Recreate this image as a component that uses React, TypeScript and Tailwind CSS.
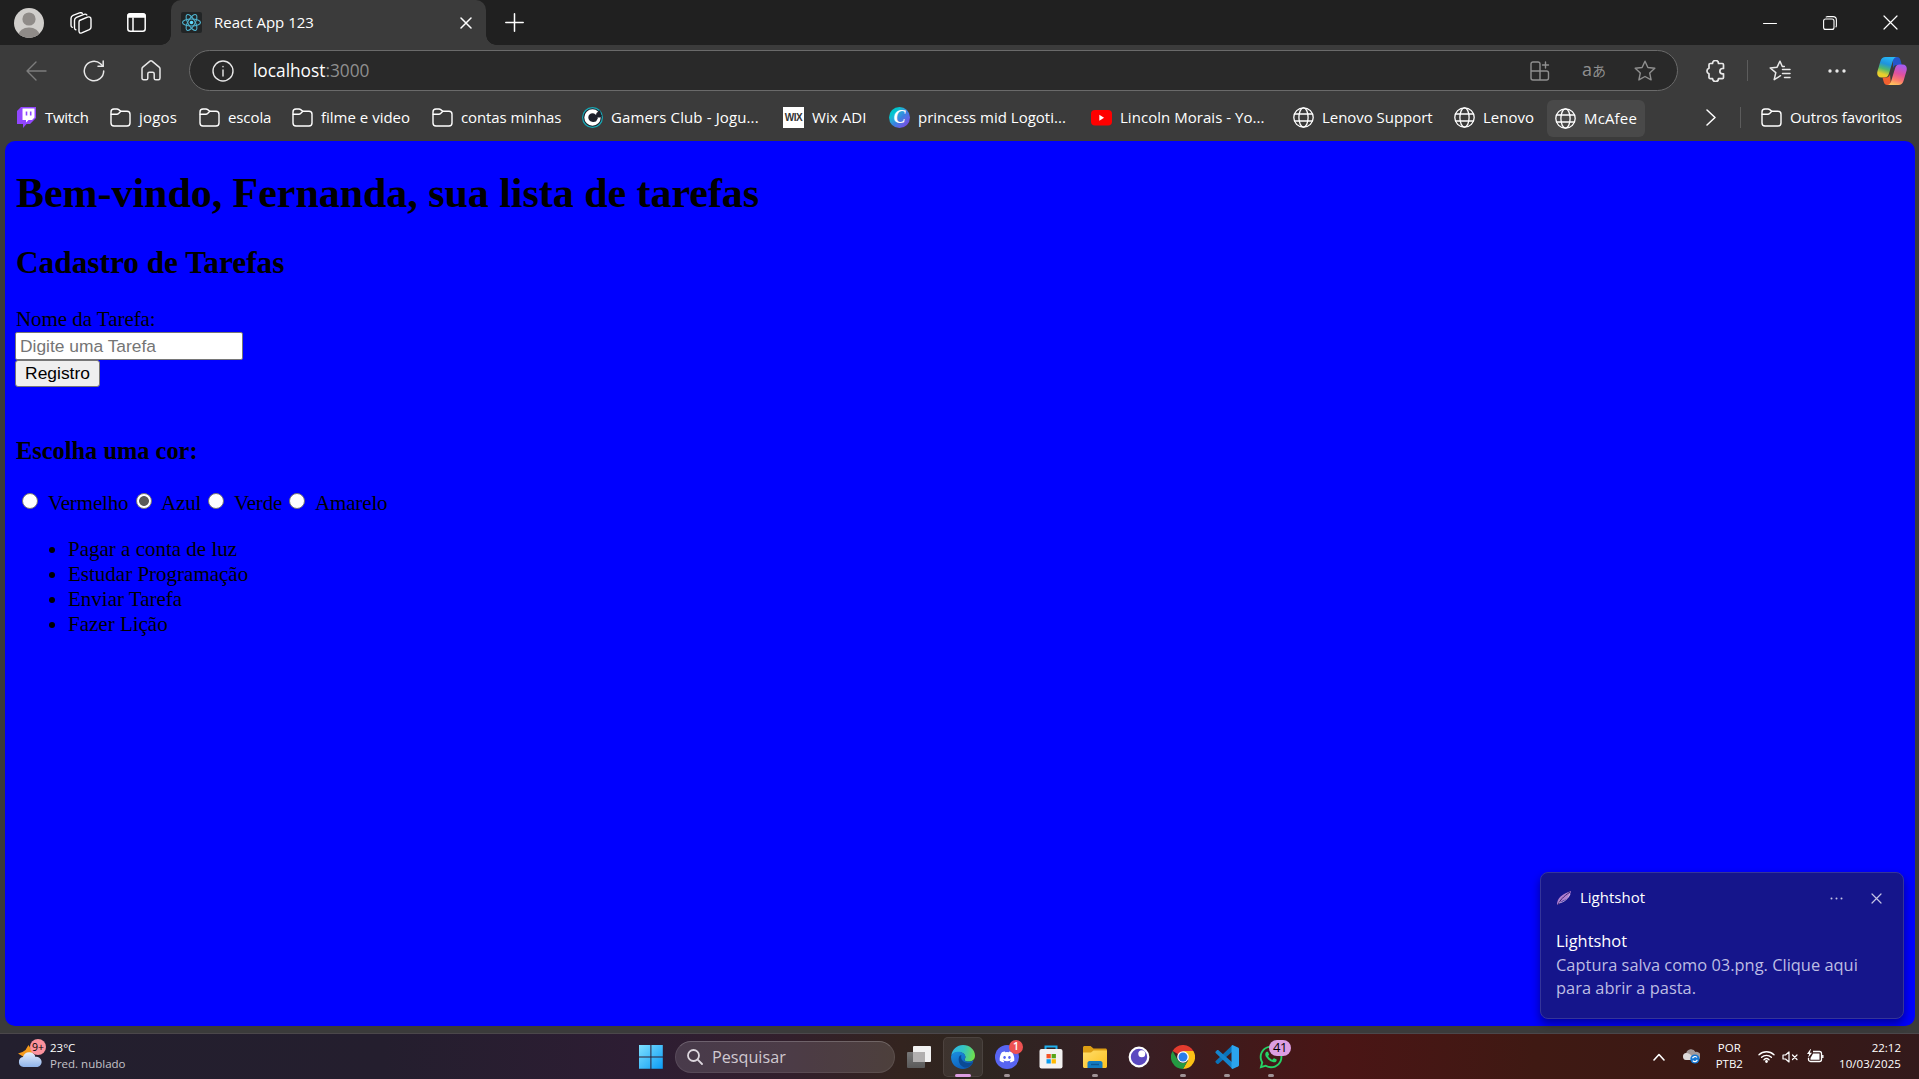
import React from "react";
import { FaDiscord, FaWhatsapp } from "react-icons/fa6";

type Kids = { children: React.ReactNode };

function Line({ w, h, sw = 1.5, cls = "", children }: { w: number; h: number; sw?: number; cls?: string } & Kids) {
  return (
    <svg width={w} height={h} viewBox={`0 0 ${w} ${h}`} fill="none" stroke="currentColor" strokeWidth={sw} strokeLinecap="round" strokeLinejoin="round" className={"shrink-0 " + cls}>
      {children}
    </svg>
  );
}

/* ---------- browser icons ---------- */

const Avatar = () => (
  <svg width="30" height="30" viewBox="0 0 30 30" className="ml-3.5 shrink-0">
    <clipPath id="av"><circle cx="15" cy="15" r="15" /></clipPath>
    <g clipPath="url(#av)">
      <rect width="30" height="30" fill="#d0cecb" />
      <circle cx="15" cy="11" r="6.6" fill="#8f8b88" />
      <ellipse cx="15" cy="27" rx="10.5" ry="7.6" fill="#8f8b88" />
    </g>
  </svg>
);

const ReactLogo = () => (
  <svg width="21" height="21" viewBox="0 0 21 21" className="shrink-0">
    <rect width="21" height="21" rx="2" fill="#222526" />
    <g fill="none" stroke="#4fb3cf" strokeWidth="1.1">
      <ellipse cx="10.5" cy="10.5" rx="9" ry="3.5" />
      <ellipse cx="10.5" cy="10.5" rx="9" ry="3.5" transform="rotate(60 10.5 10.5)" />
      <ellipse cx="10.5" cy="10.5" rx="9" ry="3.5" transform="rotate(120 10.5 10.5)" />
    </g>
    <circle cx="10.5" cy="10.5" r="1.8" fill="#61dafb" />
  </svg>
);

const Folder = () => (
  <Line w={21} h={21} sw={1.4}>
    <path d="M1 5a3 3 0 0 1 3-3h3c.7 0 1.2.2 1.7.6L10.8 4.300h6.200a3 3 0 0 1 3 3V16a3 3 0 0 1-3 3H4a3 3 0 0 1-3-3z" />
    <path d="M1.200 7.300h5.600c.8 0 1.300-.2 1.800-.7l2.200-2.300" />
  </Line>
);

const Globe = () => (
  <Line w={21} h={21} sw={1.300}>
    <circle cx="10.500" cy="10.500" r="9.700" />
    <ellipse cx="10.500" cy="10.500" rx="4.600" ry="9.700" />
    <path d="M1.700 7h17.600M1.700 14h17.600" />
  </Line>
);

const Twitch = () => (
  <svg width="19" height="21" viewBox="0 0 19 21" className="mr-px shrink-0">
    <path d="M4 0H19V11L13 17H9.500L6 21V17H0V4z" fill="#9146ff" />
    <path d="M5.500 1.500H17.500V10.500L15 13H11.500L9 15.500V13H5.500z" fill="#fff" />
    <path d="M9.500 4.500V8.500M13.700 4.500V8.500" stroke="#9146ff" strokeWidth="1.600" />
  </svg>
);

const GamersClub = () => (
  <svg width="21" height="21" viewBox="0 0 21 21" className="shrink-0">
    <circle cx="10.500" cy="10.500" r="10.500" fill="#19a9b5" />
    <circle cx="10.500" cy="10.500" r="9.300" fill="#1d1f2b" />
    <circle cx="10.500" cy="10.500" r="6.200" fill="none" stroke="#fff" strokeWidth="4" />
    <path d="M10 8h10l-1.500 2.500H10z" fill="#1d1f2b" />
    <path d="M14.500 6l3.500-3 1 5h-5z" fill="#1d1f2b" />
    <path d="M8.500 9.500L13 7.500 16 11l-2 3.500-3 .5-2.500-2z" fill="#1d1f2b" />
  </svg>
);

const Wix = () => (
  <span className="flex size-[21px] shrink-0 items-center justify-center bg-white pb-px font-['Liberation_Sans',sans-serif] text-[10px] font-bold tracking-[-0.4px] text-[#333]">WIX</span>
);

const Canva = () => (
  <span className="flex size-[21px] shrink-0 items-center justify-center rounded-full bg-linear-to-br from-[#00c4cc] from-25% via-[#3a7fe0] via-55% to-[#7d2ae8] pb-px font-['Liberation_Serif',serif] text-[18px] leading-none font-bold text-white italic">C</span>
);

const YouTube = () => (
  <svg width="21" height="21" viewBox="0 0 21 21" className="shrink-0">
    <rect y="3" width="21" height="15.500" rx="4" fill="#f00" />
    <path d="M8.300 7.800v6l4.800-3z" fill="#fff" />
  </svg>
);

const Copilot = () => (
  <svg width="30" height="28" viewBox="0 0 30 28" className="shrink-0">
    <defs>
      <linearGradient id="cpA" x1="0.6" y1="0" x2="0.3" y2="1">
        <stop offset="0" stopColor="#27b6f5" /><stop offset=".35" stopColor="#1f93dd" /><stop offset=".6" stopColor="#52b86a" /><stop offset=".85" stopColor="#e9cf2c" />
      </linearGradient>
      <linearGradient id="cpB" x1="0.7" y1="0" x2="0.4" y2="1">
        <stop offset="0" stopColor="#a45bf2" /><stop offset=".45" stopColor="#e0519f" /><stop offset=".75" stopColor="#fb7a6c" /><stop offset="1" stopColor="#ffc25c" />
      </linearGradient>
    </defs>
    <path d="M16 0h4c2.300 0 3 1.500 3.600 3.500L24.800 8H20c-2.500 0-3.500 1.500-4 3.500z" fill="#2456c9" />
    <path d="M8.500 0H19.500C17.200.4 16.400 2 15.800 4L12 16.500C11.200 19 10 20.500 7.500 20.500H4.500C1 20.500-.3 18 .4 14.500L3.500 4C4.300 1.300 6 0 8.500 0z" fill="url(#cpA)" />
    <path d="M14 28h-3.500C8 28 7.200 26.500 6.600 24.500L5.500 20.500H9c2.500 0 3.500-1.500 4-3.500z" fill="#f2602f" />
    <path d="M21.500 28H10.500c2.300-.4 3.100-2 3.700-4L18 11.500C18.800 9 20 7.500 22.500 7.500h3c3.500 0 4.800 2.500 4.100 6L26.500 24c-.8 2.700-2.500 4-5 4z" fill="url(#cpB)" />
  </svg>
);

/* ---------- taskbar icons ---------- */

const Windows = () => (
  <svg width="24" height="24" viewBox="0 0 24 24" className="shrink-0">
    <linearGradient id="win" x1="0" y1="0" x2="1" y2="1"><stop offset="0" stopColor="#7fe0ff" /><stop offset="1" stopColor="#0a9bf5" /></linearGradient>
    <path d="M0 0h11.400v11.400H0zM12.400 0h11.400v11.400H12.400zM0 12.400h11.400v11.400H0zM12.400 12.400h11.400v11.400H12.400z" fill="url(#win)" />
  </svg>
);

const TaskView = () => (
  <svg width="24" height="22" viewBox="0 0 24 22">
    <linearGradient id="tv" x1="0" y1="0" x2="0" y2="1"><stop offset="0" stopColor="#777" /><stop offset="1" stopColor="#5a5a5a" /></linearGradient>
    <rect y="6" width="18" height="16" rx="1" fill="url(#tv)" />
    <rect x="6" width="18" height="16" rx="1" fill="#f2f2f2" />
    <rect x="6" y="6" width="12" height="10" fill="#b2b0b0" />
  </svg>
);

const Edge = () => (
  <svg width="24" height="24" viewBox="0 0 24 24">
    <defs>
      <linearGradient id="eA" x1="0" y1=".3" x2="1" y2=".5"><stop offset="0" stopColor="#2cb4e8" /><stop offset=".5" stopColor="#35c5c0" /><stop offset="1" stopColor="#6fe04c" /></linearGradient>
      <linearGradient id="eB" x1="0" y1="0" x2=".6" y2="1"><stop offset="0" stopColor="#1b90e0" /><stop offset="1" stopColor="#0d5cb8" /></linearGradient>
    </defs>
    <path d="M.3 10.500C1.200 4.500 6 0 12 0c7 0 12 5 12 10.500 0 4-3 6-6.500 6-2.500 0-4-.8-4-1.800 0-.7.9-1 .9-2.700C14.400 9.500 11.500 7 8 7 3.500 7 .8 9.500.3 10.500z" fill="url(#eA)" />
    <path d="M.1 11.500C.6 8.800 3.600 6.800 7.500 6.800c4 0 6.900 2.500 6.900 5.200 0 1.700-.9 2-.9 2.700 0 1 1.500 1.800 4 1.800 2.200 0 3.800-.6 5-1.300C21.500 20 17.500 24 12 24 5 24-.5 18.500.1 11.500z" fill="url(#eB)" />
    <path d="M8.200 11.500C6.500 16.500 9 21 13.500 22.500c4 .3 7.200-2 8.800-5.800-2.300 1.300-5.500 1.800-8.300.6-3-1.200-4.500-4-3.600-7.300-1 .2-1.800.8-2.200 1.500z" fill="#0b4a94" />
  </svg>
);

const Store = () => (
  <svg width="24" height="24" viewBox="0 0 24 24">
    <path d="M6.500 5V1.500h11V5" fill="none" stroke="#1fb0ee" strokeWidth="2" />
    <rect x=".5" y="4" width="23" height="19.500" rx="2" fill="#f3f2f1" />
    <rect x="7.500" y="9" width="4.300" height="4.300" fill="#f35325" /><rect x="12.600" y="9" width="4.300" height="4.300" fill="#57a518" />
    <rect x="7.500" y="14.200" width="4.300" height="4.300" fill="#0a9cee" /><rect x="12.600" y="14.200" width="4.300" height="4.300" fill="#ffb900" />
  </svg>
);

const Explorer = () => (
  <svg width="24" height="22" viewBox="0 0 24 22">
    <linearGradient id="fx" x1="0" y1="0" x2="1" y2="1"><stop offset="0" stopColor="#ffdd6b" /><stop offset="1" stopColor="#fcc01d" /></linearGradient>
    <path d="M0 1.500C0 .7.700 0 1.500 0h6l3 2.500H22.500c.8 0 1.500.7 1.500 1.500V8H0z" fill="#dd9e13" />
    <path d="M0 6.500h8l2.500-2H24V20.500c0 .8-.7 1.500-1.500 1.500h-21C.7 22 0 21.300 0 20.500z" fill="url(#fx)" />
    <path d="M4.500 22v-5c0-1 .8-2 2-2h11c1.200 0 2 1 2 2v5z" fill="#127bc0" />
    <path d="M8 18.500h8" stroke="#0a5794" strokeWidth="1.400" />
  </svg>
);

const Insomnia = () => (
  <svg width="22" height="22" viewBox="0 0 22 22">
    <circle cx="11" cy="11" r="9.300" fill="#5a49c0" stroke="#fff" strokeWidth="2.200" />
    <circle cx="13.800" cy="7.700" r="3.500" fill="#fff" />
  </svg>
);

const Chrome = () => (
  <svg width="24" height="24" viewBox="0 0 24 24">
    <path d="M12 12L1.600 6A12 12 0 0 1 22.400 6z" fill="#e33b2e" />
    <path d="M12 6h10.400a12 12 0 0 1-10.400 18l5.200-9z" fill="#fbc116" />
    <path d="M1.600 6l5.200 9a6 6 0 0 0 10.400 0L12 24A12 12 0 0 1 1.600 6z" fill="#249a42" />
    <circle cx="12" cy="12" r="5.800" fill="#fff" />
    <circle cx="12" cy="12" r="4.500" fill="#2b7de9" />
  </svg>
);

const VSCode = () => (
  <svg width="24" height="24" viewBox="0 0 24 24">
    <path d="M17.500 0L17.500 6.500 3.500 18.800c-.4.400-.9.400-1.300.1L.7 17.600c-.5-.5-.5-1.100 0-1.600z" fill="#0a72b8" />
    <path d="M17.500 24L17.500 17.500 3.500 5.200c-.4-.4-.9-.4-1.300-.1L.7 6.400c-.5.5-.5 1.100 0 1.600z" fill="#1584cc" />
    <path d="M17.500 0L23 2.500c.6.300 1 .8 1 1.500V20c0 .7-.4 1.200-1 1.500L17.500 24c-.7-.3-1-.8-1-1.600V1.600c0-.8.300-1.300 1-1.600z" fill="#2ba4ee" />
  </svg>
);

const Weather = () => (
  <svg width="28" height="28" viewBox="0 0 28 28" className="shrink-0">
    <linearGradient id="wc" x1="0" y1="0" x2="0" y2="1"><stop offset="0" stopColor="#e6effc" /><stop offset="1" stopColor="#8fb3ea" /></linearGradient>
    <path d="M10.500 5l2.500 4 4 8-9 3-3-3.500-5-3 4.500-1.500 3-2z" fill="#f59a1b" />
    <path d="M5.500 27a5 5 0 0 1-.5-9.900 6.500 6.500 0 0 1 12.500-.2A5 5 0 0 1 19.500 27z" fill="url(#wc)" />
  </svg>
);

/* ---------- pieces ---------- */

function Bookmark({ cls, icon, label }: { cls: string; icon: React.ReactNode; label: string }) {
  return (
    <div className={"flex shrink-0 items-center gap-2 whitespace-nowrap " + cls}>
      {icon}
      <span>{label}</span>
    </div>
  );
}

function TaskItem({ active = false, dot = false, children }: { active?: boolean; dot?: boolean } & Kids) {
  return (
    <div className={"relative flex h-10 w-10 items-center justify-center rounded-[5px] " + (active ? "border border-white/8 bg-white/7" : "")}>
      {children}
      {active && <span className="absolute -bottom-px h-[3px] w-4 rounded-full bg-[#dc9ee2]" />}
      {dot && <span className="absolute bottom-0 h-[3px] w-1.5 rounded-full bg-[#a09396]" />}
    </div>
  );
}

function Radio({ checked = false }: { checked?: boolean }) {
  return (
    <input
      type="radio"
      name="cor"
      defaultChecked={checked}
      className="mt-[2px] size-4 shrink-0 appearance-none self-start rounded-full border border-[#767676] bg-white checked:bg-[radial-gradient(circle,#5a5a5a_4.5px,#fff_5.3px)]"
    />
  );
}

function TabBar() {
  return (
    <div className="flex h-[45px] shrink-0 items-center bg-[#202020] text-white">
      <Avatar />
      <Line w={22} h={22} sw={1.4} cls="ml-[26px]">
        <path d="M9.500 8.500l8-3.300c1.700-.7 3.500 0 3.500 2v8c0 1.300-.6 2-1.700 2.500l-7.600 3.200c-1.700.6-2.700-.2-2.700-1.800v-8.500c0-1.100.2-1.700.5-2.100z" />
        <path d="M5.800 17.800c-.9-.2-1.300-.9-1.300-2V8.500c0-1.600.6-2.600 2-3.200L14 2.300c1.200-.4 2.200-.2 2.800.6" />
        <path d="M2.300 15.300C1.400 15 1 14.200 1 13.200V6.500c0-1.600.6-2.600 2-3.200L9.500.9c1.200-.4 2.200-.2 2.800.4" />
      </Line>
      <Line w={19} h={19} sw={1.500} cls="ml-[35px]">
        <rect x=".8" y=".8" width="17.400" height="17.400" rx="2.500" />
        <path d="M1 4h17V3a2 2 0 0 0-2-2H3a2 2 0 0 0-2 2z" fill="currentColor" />
        <path d="M6 5v13" />
      </Line>
      <div className="relative ml-[25px] flex h-full w-[315px] items-center rounded-t-[10px] bg-[#3b3b3b] pl-[10px]">
        <span className="absolute bottom-0 left-[-10px] size-[10px] bg-[radial-gradient(circle_at_0_0,#202020_9.5px,#3b3b3b_10px)]" />
        <span className="absolute right-[-10px] bottom-0 size-[10px] bg-[radial-gradient(circle_at_100%_0,#202020_9.5px,#3b3b3b_10px)]" />
        <ReactLogo />
        <span className="ml-3 text-[15px]">React App 123</span>
        <Line w={12} h={12} sw={1.500} cls="mr-[14px] ml-auto"><path d="M1 1l10 10M11 1L1 11" /></Line>
      </div>
      <Line w={19} h={19} sw={1.500} cls="ml-[19px]"><path d="M9.500 .8v17.400M.8 9.500h17.400" /></Line>
      <div className="mr-[21px] ml-auto flex items-center gap-[46px]">
        <Line w={14} h={14} sw={1}><path d="M.5 7.500h13" /></Line>
        <Line w={14} h={14} sw={1.100}>
          <rect x=".6" y="3" width="10.400" height="10.400" rx="2" />
          <path d="M3.200 1c.5-.3.900-.4 1.400-.4H10c2 0 3.400 1.400 3.400 3.400v5.400c0 .6-.1 1-.4 1.400" />
        </Line>
        <Line w={15} h={15} sw={1.200}><path d="M1 1l13 13M14 1L1 14" /></Line>
      </div>
    </div>
  );
}

function Toolbar() {
  return (
    <div className="flex h-[51px] shrink-0 items-center text-[#e8e8e8]">
      <Line w={21} h={20} sw={1.400} cls="ml-[26px] text-[#7d7d7d]"><path d="M20 10H1M10 1L1 10l9 9" /></Line>
      <Line w={22} h={22} sw={1.500} cls="ml-[36px]">
        <path d="M20.700 11A9.700 9.700 0 1 1 17.500 3.800L20 6.300" /><path d="M20.200 1v5.300H15" />
      </Line>
      <Line w={20} h={21} sw={1.500} cls="ml-9">
        <path d="M1 8.700c0-.6.300-1.200.8-1.600L9 1.200c.6-.5 1.400-.5 2 0l7.200 5.900c.5.400.8 1 .8 1.600V18c0 1.100-.6 1.800-1.600 1.800h-2.600c-1 0-1.600-.7-1.600-1.600v-4.400c0-1-.6-1.600-1.600-1.600H8.400c-1 0-1.600.6-1.600 1.600v4.400c0 .9-.6 1.600-1.600 1.600H2.600C1.600 19.800 1 19.100 1 18z" />
      </Line>
      <div className="ml-[28px] flex h-[41px] w-[1489px] items-center rounded-full border border-[#6a6a6a] bg-[#292929]">
        <Line w={22} h={22} sw={1.400} cls="ml-[22px]"><circle cx="11" cy="11" r="10" /><path d="M11 10v6M11 6.500v.3" /></Line>
        <span className="mt-px ml-[19px] text-[17.3px] text-white">localhost<span className="text-[#8f8f8f]">:3000</span></span>
        <div className="mr-[21px] ml-auto flex items-center text-[#8f8f8f]">
          <Line w={20} h={20} sw={1.400}>
            <path d="M10 10H1v7a2 2 0 0 0 2 2h7zM10 10V3a2 2 0 0 0-2-2H3a2 2 0 0 0-2 2v7M10 10h6.500a2 2 0 0 1 2 2v5a2 2 0 0 1-2 2H10zM15.500 1v6M12.500 4h6" />
          </Line>
          <span className="-mt-1 ml-8 flex w-6 items-center font-['Open_Sans',sans-serif] text-[18px] leading-none">a<span className="mt-0.5 font-['Noto_Sans_CJK_JP',sans-serif] text-[14px]">あ</span></span>
          <Line w={22} h={22} sw={1.400} cls="ml-[28px]"><path d="M11 1.200l2.900 6.300 6.900.8-5.100 4.700 1.400 6.900L11 16.500l-6.100 3.400 1.400-6.900L1.200 8.300l6.900-.8z" /></Line>
        </div>
      </div>
      <Line w={21} h={22} sw={1.700} cls="ml-[27px]">
        <path d="M7.500 3.500a3 3 0 0 1 6 0h3.800c.6 0 1.200.5 1.200 1.200v3.800h-1a2.600 2.600 0 0 0 0 5.300h1v3.600c0 .7-.5 1.200-1.200 1.200H13.500a3 3 0 0 1-6 0H5.200c-.7 0-1.200-.5-1.200-1.200v-3.500a3 3 0 0 1 0-5.700V4.700c0-.7.500-1.200 1.200-1.200z" />
      </Line>
      <span className="ml-[21px] h-[21px] w-px bg-[#5c5c5c]" />
      <Line w={22} h={22} sw={1.500} cls="ml-[21px]">
        <path d="M11.500 15.700l-6.300 4 1.600-7.100L1.200 8l6.900-.8L11 1.200l2.300 5.300h2" /><path d="M13.500 9.500h7.500M13.500 13.500h7.500M15.500 17.500h5.500" />
      </Line>
      <svg width="18" height="4" viewBox="0 0 18 4" className="ml-[37px] shrink-0" fill="currentColor"><circle cx="2" cy="2" r="1.700" /><circle cx="9" cy="2" r="1.700" /><circle cx="16" cy="2" r="1.700" /></svg>
      <span className="ml-[31px]"><Copilot /></span>
    </div>
  );
}

function Bookmarks() {
  return (
    <div className="mb-0.5 flex h-[43px] shrink-0 items-center pl-[17px] text-[15px] text-white">
      <Bookmark cls="w-[93px] tracking-[-0.3px]" icon={<Twitch />} label="Twitch" />
      <Bookmark cls="w-[89px] tracking-[0.2px]" icon={<Folder />} label="jogos" />
      <Bookmark cls="w-[93px] tracking-[-0.1px]" icon={<Folder />} label="escola" />
      <Bookmark cls="w-[140px]" icon={<Folder />} label="filme e video" />
      <Bookmark cls="w-[150px] tracking-[-0.1px]" icon={<Folder />} label="contas minhas" />
      <Bookmark cls="w-[201px] tracking-[0.12px]" icon={<GamersClub />} label="Gamers Club - Jogu..." />
      <Bookmark cls="w-[106px] tracking-[0.1px]" icon={<Wix />} label="Wix ADI" />
      <Bookmark cls="w-[202px]" icon={<Canva />} label="princess mid Logoti..." />
      <Bookmark cls="w-[202px] tracking-[0.04px]" icon={<YouTube />} label="Lincoln Morais - Yo..." />
      <Bookmark cls="w-[161px] tracking-[-0.04px]" icon={<Globe />} label="Lenovo Support" />
      <Bookmark cls="w-[93px]" icon={<Globe />} label="Lenovo" />
      <Bookmark cls="mt-0.5 h-[37px] w-[98px] rounded-md bg-[#494949] pl-2 tracking-[0.15px]" icon={<Globe />} label="McAfee" />
      <Line w={10} h={17} sw={1.500} cls="ml-[61px]"><path d="M1 1l8 7.500L1 16" /></Line>
      <span className="ml-[24px] h-[21px] w-px bg-[#5c5c5c]" />
      <Bookmark cls="ml-5 tracking-[-0.1px]" icon={<Folder />} label="Outros favoritos" />
    </div>
  );
}

function Page() {
  return (
    <div className="mr-1 mb-[7px] ml-[5px] flex flex-1 flex-col items-start rounded-[10px] bg-[#0000ff] pl-[11px] font-['Liberation_Serif',serif] text-[21px] leading-[25px] text-black">
      <h1 className="mt-[28px] text-[42px] leading-[48px] font-bold tracking-[-0.04px]">Bem-vindo, Fernanda, sua lista de tarefas</h1>
      <h2 className="mt-[28px] text-[31.3px] leading-[36px] font-bold">Cadastro de Tarefas</h2>
      <label className="mt-[26px] tracking-[-0.05px]">Nome da Tarefa:</label>
      <input
        placeholder="Digite uma Tarefa"
        className="-ml-px h-7 w-[228px] rounded-[2px] border border-[#767676] bg-white px-1 font-['Liberation_Sans',sans-serif] text-[17.4px] placeholder:text-[#757575]"
      />
      <button className="-ml-px h-[27px] w-[85px] rounded-[3px] border border-[#767676] bg-[#efefef] font-['Liberation_Sans',sans-serif] text-[17.4px] leading-none">Registro</button>
      <h3 className="mt-[49px] text-[24.4px] leading-[29px] font-bold">Escolha uma cor:</h3>
      <div className="mt-[26px] flex h-[25px] pl-[6px] tracking-[-0.15px]">
        <Radio /><span className="ml-[10px] w-[88px]">Vermelho</span>
        <Radio checked /><span className="ml-[9px] w-[47px]">Azul</span>
        <Radio /><span className="ml-[10px] w-[55px]">Verde</span>
        <Radio /><span className="ml-[10px]">Amarelo</span>
      </div>
      <ul className="mt-[21px] list-disc pl-[52px]">
        <li>Pagar a conta de luz</li>
        <li>Estudar Programação</li>
        <li>Enviar Tarefa</li>
        <li>Fazer Lição</li>
      </ul>
    </div>
  );
}

function Toast() {
  return (
    <div className="absolute top-[872px] left-[1540px] h-[147px] w-[364px] rounded-lg border border-[#34349a] bg-[#15158b] px-[15px] text-white shadow-[0_5px_10px_rgba(0,0,0,0.4)]">
      <div className="mt-[13px] flex h-6 items-center">
        <svg width="14" height="14" viewBox="0 0 14 14" className="ml-px">
          <path d="M0 14C0 7 5 3 14 0c-1 6-4 8-9 10z" fill="#b07fd0" /><path d="M1 14C3 9 6 6 13 1" stroke="#3b2470" strokeWidth="1" fill="none" /><path d="M2 12c5-1 9-4 11-9" stroke="#e3c8ee" strokeWidth=".8" fill="none" />
        </svg>
        <span className="-mt-0.5 ml-[9px] text-[15px]">Lightshot</span>
        <svg width="13" height="3" viewBox="0 0 13 3" fill="#c4c4e4" className="ml-auto"><circle cx="1.500" cy="1.500" r="1" /><circle cx="6.500" cy="1.500" r="1" /><circle cx="11.500" cy="1.500" r="1" /></svg>
        <Line w={11} h={11} sw={1.200} cls="mr-[6px] ml-[28px] text-[#c4c4e4]"><path d="M1 1l9 9M10 1l-9 9" /></Line>
      </div>
      <div className="mt-[19px] text-[16.4px] leading-[23px]">
        <p>Lightshot</p>
        <p className="mt-px tracking-[0.02px] text-[#bdbde3]">Captura salva como 03.png. Clique aqui<br />para abrir a pasta.</p>
      </div>
    </div>
  );
}

function Taskbar() {
  return (
    <div className="flex h-[46px] shrink-0 items-center border-t border-[#4b474b] bg-[linear-gradient(90deg,#231f2e_0%,#241e2e_20%,#2d1d33_33%,#321f2c_41%,#33241f_47%,#2d2520_51%,#371f25_59%,#401a1b_64%,#4a1515_70%,#3f1913_80%,#3b1914_88%,#33191b_100%)] text-white">
      <div className="flex w-[639px] items-center pl-[18px] text-[11.5px] leading-4">
        <div className="relative -mt-[6px]">
          <Weather />
          <span className="absolute -top-px left-[12px] flex size-4 items-center justify-center rounded-full bg-[#fb929d] text-[10.5px] text-black">9+</span>
        </div>
        <div className="-mt-0.5 ml-1">
          <div>23°C</div>
          <div className="text-[#c5c3c9]">Pred. nublado</div>
        </div>
      </div>
      <Windows />
      <div className="ml-3 flex h-8 w-[220px] items-center rounded-full border border-white/8 border-t-white/20 bg-white/13">
        <Line w={16} h={16} sw={1.800} cls="ml-[11px] text-[#dcd6dd]"><circle cx="6.500" cy="6.500" r="5.500" /><path d="M10.700 10.700l4.300 4.300" /></Line>
        <span className="mt-0.5 ml-[9px] text-[16.2px] text-[#d0c9d0]">Pesquisar</span>
      </div>
      <div className="ml-1 flex items-center gap-1">
        <TaskItem><TaskView /></TaskItem>
        <TaskItem active><Edge /></TaskItem>
        <TaskItem dot>
          <span className="flex size-6 items-center justify-center rounded-full bg-[#5865f2]"><FaDiscord size={16} /></span>
          <span className="absolute top-[3px] right-[4px] flex size-[14px] items-center justify-center rounded-full bg-[#ee5252] text-[10.5px] font-semibold">1</span>
        </TaskItem>
        <TaskItem><Store /></TaskItem>
        <TaskItem dot><Explorer /></TaskItem>
        <TaskItem><Insomnia /></TaskItem>
        <TaskItem dot><Chrome /></TaskItem>
        <TaskItem dot><VSCode /></TaskItem>
        <TaskItem dot>
          <FaWhatsapp size={26} color="#25d366" />
          <span className="absolute top-[3px] left-[18px] flex h-4 w-[22px] items-center justify-center rounded-full bg-[#dc9ee2] text-[13px] tracking-[-0.5px] text-black">41</span>
        </TaskItem>
      </div>
      <div className="mr-[18px] ml-auto flex items-center text-[11.5px] leading-4">
        <Line w={12} h={8} sw={1.600}><path d="M1 7l5-5.500L11 7" /></Line>
        <svg width="17" height="15" viewBox="0 0 17 15" className="ml-[18px]">
          <path d="M3.500 11a3.500 3.500 0 0 1-.3-6.900A5 5 0 0 1 12.500 3a4 4 0 0 1 2 8z" fill="#a39a9a" /><path d="M3.500 11a3.500 3.500 0 0 1 0-7c2 0 4 1 6 4l1 3z" fill="#dedada" />
          <circle cx="11.900" cy="10" r="4.600" fill="#1477d4" /><path d="M9.500 9.300a2.600 2.600 0 0 1 4.500-.8M14.300 10.800a2.600 2.600 0 0 1-4.500.8" stroke="#fff" strokeWidth="1.200" fill="none" />
        </svg>
        <div className="-mt-0.5 ml-4 text-center"><div>POR</div><div>PTB2</div></div>
        <Line w={17} h={13} sw={1.400} cls="ml-[15px] -mt-px"><path d="M1 4.700a11 11 0 0 1 15 0M3.600 7.300a7.200 7.200 0 0 1 9.800 0M6 9.700a3.700 3.700 0 0 1 5 0" /><circle cx="8.500" cy="11.500" r=".7" fill="currentColor" /></Line>
        <Line w={16} h={12} sw={1.200} cls="ml-[7px]"><path d="M1 4h2.500L7 1v10L3.500 8H1zM10.500 4l4.500 4.500M15 4l-4.500 4.500" /></Line>
        <svg width="18" height="14" viewBox="0 0 18 14" className="-mt-0.5 ml-[8px]">
          <path d="M7 2.500h6.500a2 2 0 0 1 2 2v6a2 2 0 0 1-2 2h-9a2 2 0 0 1-2-2V9" fill="none" stroke="#fff" strokeWidth="1.300" /><path d="M7 4.500h6.500v6.200h-9V9z" fill="#fff" /><path d="M16.800 6v3" stroke="#fff" strokeWidth="1.400" /><path d="M4.500 0L1 5h2.200L2 9l4-5.200H3.800L5 0z" fill="#fff" />
        </svg>
        <div className="-mt-0.5 ml-[15px] text-right"><div>22:12</div><div className="tracking-[0.1px]">10/03/2025</div></div>
      </div>
    </div>
  );
}

export default function App() {
  return (
    <div className="relative flex h-[1079px] w-[1919px] flex-col overflow-hidden bg-[#3b3b3b] font-['Open_Sans',sans-serif]">
      <TabBar />
      <Toolbar />
      <Bookmarks />
      <Page />
      <Taskbar />
      <Toast />
    </div>
  );
}
